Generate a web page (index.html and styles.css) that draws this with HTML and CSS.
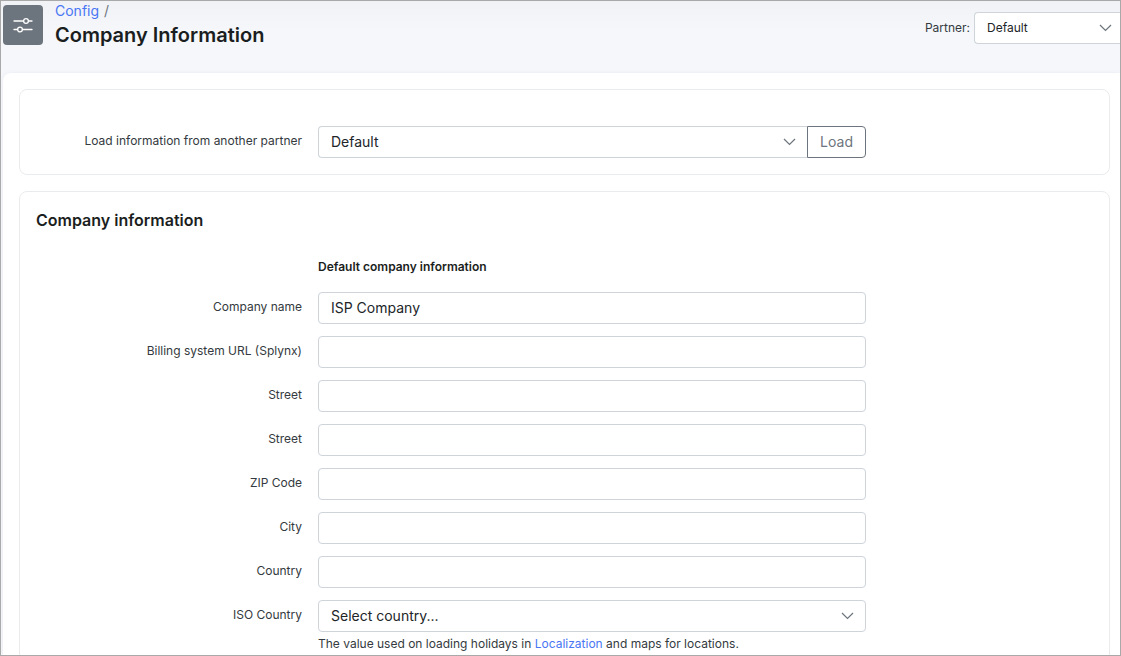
FILE: index.html
```html
<!DOCTYPE html>
<html lang="en">
<head>
<meta charset="utf-8">
<title>Company Information</title>
<link rel="stylesheet" href="styles.css">
</head>
<body>
<header class="page-header">
  <div class="page-icon">
    <svg width="20" height="20" viewBox="0 0 20 20" fill="none" stroke="currentColor" stroke-width="1.3" stroke-linecap="round">
      <path d="M1 6h9.6M15.4 6H19M1 14.5h3.6M9.4 14.5H19"/>
      <circle cx="13" cy="6" r="2.4"/>
      <circle cx="7" cy="14.5" r="2.4"/>
    </svg>
  </div>
  <div class="page-title">
    <nav class="breadcrumb"><a href="#">Config</a><span>/</span></nav>
    <h1>Company Information</h1>
  </div>
  <div class="partner">
    <label for="partner">Partner:</label>
    <div class="select partner-select">
      <select id="partner"><option>Default</option></select>
      <svg class="chevron" width="13" height="8" viewBox="0 0 13 8"><path d="M1 1l5.5 5.5L12 1"/></svg>
    </div>
  </div>
</header>
<main class="content">
  <section class="card load-card">
    <div class="row">
      <label for="load-partner">Load information from another partner</label>
      <div class="input-group">
        <div class="select">
          <select id="load-partner"><option>Default</option></select>
          <svg class="chevron" width="13" height="8" viewBox="0 0 13 8"><path d="M1 1l5.5 5.5L12 1"/></svg>
        </div>
        <button type="button" class="load-button">Load</button>
      </div>
    </div>
  </section>
  <section class="card info-card">
    <h2>Company information</h2>
    <form class="form">
      <div class="row"><h3>Default company information</h3></div>
      <div class="row"><label for="name">Company name</label><input id="name" type="text" value="ISP Company"></div>
      <div class="row"><label for="url">Billing system URL (Splynx)</label><input id="url" type="text"></div>
      <div class="row"><label for="street1">Street</label><input id="street1" type="text"></div>
      <div class="row"><label for="street2">Street</label><input id="street2" type="text"></div>
      <div class="row"><label for="zip">ZIP Code</label><input id="zip" type="text"></div>
      <div class="row"><label for="city">City</label><input id="city" type="text"></div>
      <div class="row"><label for="country">Country</label><input id="country" type="text"></div>
      <div class="row">
        <label for="iso">ISO Country</label>
        <div class="field">
          <div class="select">
            <select id="iso"><option>Select country...</option></select>
            <svg class="chevron" width="13" height="8" viewBox="0 0 13 8"><path d="M1 1l5.5 5.5L12 1"/></svg>
          </div>
          <p class="hint">The value used on loading holidays in <a href="#">Localization</a> and maps for locations.</p>
        </div>
      </div>
    </form>
  </section>
</main>
</body>
</html>
```
FILE: styles.css
```css
* {
  box-sizing: border-box;
}

body {
  display: flex;
  flex-direction: column;
  height: 100vh;
  margin: 0;
  overflow: hidden;
  border: 1px solid #a9a9a9;
  background: #f5f7fb;
  color: #343a40;
  font-family: Inter, "Liberation Sans", sans-serif;
  font-size: 12px;
  line-height: 18px;
}

h1, h2, h3, p {
  margin: 0;
}

h1, h2, h3 {
  color: #1b1e21;
}

a {
  color: #4976f4;
  text-decoration: none;
}

.page-header {
  display: flex;
  flex: none;
  align-items: flex-start;
  height: 72px;
  padding-left: 2px;
  background: linear-gradient(#f1f2f6, #f5f7fb 30px);
}

.page-icon {
  display: flex;
  align-items: center;
  justify-content: center;
  width: 40px;
  height: 40px;
  margin-top: 4px;
  border-radius: 4px;
  background: #6c757d;
  color: #fff;
}

.page-title {
  flex: 1;
  padding-left: 12px;
}

.breadcrumb {
  display: flex;
  gap: 5px;
  color: #6c757d;
  font-size: 14px;
  line-height: 20px;
}

h1 {
  font-size: 20px;
  font-weight: 600;
  line-height: 28px;
}

.partner {
  display: flex;
  align-items: center;
  gap: 4px;
  margin-top: 11px;
}

.partner-select {
  width: 146px;
}

.partner-select select {
  border-right: 0;
  border-radius: 4px 0 0 4px;
  font-size: 12px;
}

.partner-select .chevron {
  right: 8px;
}

.content {
  flex: 1;
  min-height: 0;
  margin-left: 2px;
  padding: 16px 10px 0 16px;
  overflow: hidden;
  border-radius: 8px 0 0 0;
  background: #fff;
  box-shadow: 0 0 4px #e9eaf0;
}

.card {
  padding: 0 16px;
  border: 1px solid #e9ebed;
  border-radius: 8px;
}

.load-card {
  margin-bottom: 16px;
  padding-top: 36px;
  padding-bottom: 16px;
}

.info-card {
  padding-top: 16px;
  padding-bottom: 32px;
}

h2 {
  margin-bottom: 24px;
  font-size: 16px;
  font-weight: 600;
  line-height: 24px;
}

h3 {
  grid-column: 2;
  margin-bottom: 2px;
  font-size: 12px;
  font-weight: 600;
  line-height: 22px;
}

.form {
  display: grid;
  gap: 12px;
}

.row {
  display: grid;
  grid-template-columns: 266fr 548fr 211fr;
  column-gap: 16px;
  align-items: start;
}

.row label {
  padding-top: 6px;
  text-align: right;
}

input,
select {
  width: 100%;
  height: 32px;
  padding: 0 12px 2px;
  border: 1px solid #ced4da;
  border-radius: 4px;
  background: #fff;
  color: #212529;
  font-family: inherit;
  font-size: 14px;
}

select {
  display: block;
  appearance: none;
}

.select {
  position: relative;
}

.chevron {
  position: absolute;
  top: 12px;
  right: 12px;
  fill: none;
  stroke: #6c757d;
  stroke-width: 1.2;
  pointer-events: none;
}

.input-group {
  display: flex;
}

.input-group .select {
  flex: 1;
}

.input-group select {
  border-right: 0;
  border-radius: 4px 0 0 4px;
}

.input-group .chevron {
  right: 11px;
}

.load-button {
  padding: 0 12px 2px;
  border: 1px solid #6c757d;
  border-radius: 0 4px 4px 0;
  background: #fff;
  color: #6c757d;
  font-family: inherit;
  font-size: 14px;
}

.hint {
  margin-top: 3px;
}
```
